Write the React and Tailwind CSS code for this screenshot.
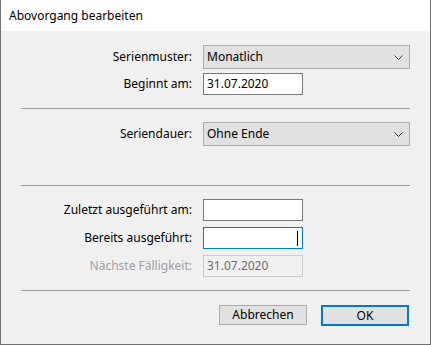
import React from 'react';

// Chevron used by the combo boxes
const Chevron = () => (
  <svg width="9" height="5" viewBox="0 0 9 5" className="shrink-0">
    <path d="M0.5 0.5 L4.5 4.5 L8.5 0.5" fill="none" stroke="#404040" strokeWidth="1" />
  </svg>
);

const Select = ({ value }) => (
  <div className="flex-1 h-[24px] flex items-center justify-between bg-[#e1e1e1] border border-[#adadad] pl-[3px] pr-[6px]">
    <span>{value}</span>
    <Chevron />
  </div>
);

const Field = ({ value, focused, disabled }) => (
  <div
    className={
      disabled
        ? 'relative w-[100px] h-[22px] flex items-center border border-[#cccccc] bg-[#f0f0f0] pl-[3px] text-[#6d6d6d]'
        : focused
        ? 'relative w-[100px] h-[22px] flex items-center border border-[#0078d7] bg-white pl-[3px]'
        : 'relative w-[100px] h-[22px] flex items-center border border-[#7a7a7a] bg-white pl-[3px]'
    }
  >
    {value}
    {focused && <span className="absolute left-[93px] top-[3px] w-px h-[15px] bg-black" />}
  </div>
);

const Row = ({ label, disabled, className = '', children }) => (
  <div className={'flex items-center ' + className}>
    <div className={'w-[172px] pr-[1px] text-right ' + (disabled ? 'text-[#a0a0a0]' : 'text-black')}>{label}</div>
    <div className="flex-1 flex ml-[10px]">{children}</div>
  </div>
);

const App = () => {
  return (
    <div className="w-[431px] h-[345px] flex flex-col bg-[#f0f0f0] border-l border-r border-b border-[#707070] text-[12px] text-black font-['Segoe_UI','Noto_Sans',sans-serif] leading-none">
      {/* Title bar */}
      <div className="h-[31px] shrink-0 bg-white flex items-center pl-[8px]">Abovorgang bearbeiten</div>

      <div className="flex flex-col px-[20px] pt-[14px]">
        <Row label="Serienmuster:">
          <Select value="Monatlich" />
        </Row>
        <Row label="Beginnt am:" className="mt-[4px]">
          <Field value="31.07.2020" />
        </Row>

        <div className="mt-[13px] border-t border-[#a0a0a0]" />

        <Row label="Seriendauer:" className="mt-[13px]">
          <Select value="Ohne Ende" />
        </Row>

        <div className="mt-[39px] border-t border-[#a0a0a0]" />

        <Row label="Zuletzt ausgeführt am:" className="mt-[13px]">
          <Field value="" />
        </Row>
        <Row label="Bereits ausgeführt:" className="mt-[6px]">
          <Field value="" focused />
        </Row>
        <Row label="Nächste Fälligkeit:" disabled className="mt-[6px]">
          <Field value="31.07.2020" disabled />
        </Row>

        <div className="mt-[13px] border-t border-[#a0a0a0]" />

        {/* Buttons */}
        <div className="mt-[14px] flex justify-end gap-[14px] mr-[1px]">
          <button className="w-[88px] h-[20px] bg-[#e1e1e1] border border-[#adadad] flex items-center justify-center">
            Abbrechen
          </button>
          <button className="w-[88px] h-[21px] bg-[#e1e1e1] border-2 border-[#0078d7] flex items-center justify-center">
            OK
          </button>
        </div>
      </div>
    </div>
  );
};

export default App;
